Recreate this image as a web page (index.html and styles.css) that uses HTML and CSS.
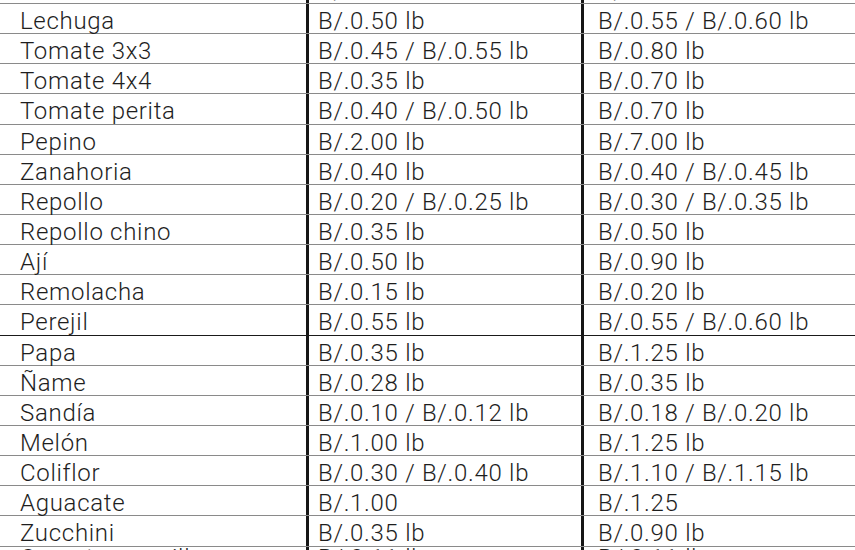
FILE: index.html
```html
<!DOCTYPE html>
<html lang="es">
<head>
<meta charset="utf-8">
<title>Precios de vegetales</title>
<link rel="stylesheet" href="styles.css">
</head>
<body>
<div class="tabla">
  <div class="fila"><div class="c c1">Brócoli</div><div class="c c2">B/.0.60 lb</div><div class="c c3">B/.1.25 lb</div></div>
  <div class="fila"><div class="c c1">Lechuga</div><div class="c c2">B/.0.50 lb</div><div class="c c3">B/.0.55 / B/.0.60 lb</div></div>
  <div class="fila"><div class="c c1">Tomate 3x3</div><div class="c c2">B/.0.45 / B/.0.55 lb</div><div class="c c3">B/.0.80 lb</div></div>
  <div class="fila"><div class="c c1">Tomate 4x4</div><div class="c c2">B/.0.35 lb</div><div class="c c3">B/.0.70 lb</div></div>
  <div class="fila"><div class="c c1">Tomate perita</div><div class="c c2">B/.0.40 / B/.0.50 lb</div><div class="c c3">B/.0.70 lb</div></div>
  <div class="fila"><div class="c c1">Pepino</div><div class="c c2">B/.2.00 lb</div><div class="c c3">B/.7.00 lb</div></div>
  <div class="fila"><div class="c c1">Zanahoria</div><div class="c c2">B/.0.40 lb</div><div class="c c3">B/.0.40 / B/.0.45 lb</div></div>
  <div class="fila"><div class="c c1">Repollo</div><div class="c c2">B/.0.20 / B/.0.25 lb</div><div class="c c3">B/.0.30 / B/.0.35 lb</div></div>
  <div class="fila"><div class="c c1">Repollo chino</div><div class="c c2">B/.0.35 lb</div><div class="c c3">B/.0.50 lb</div></div>
  <div class="fila"><div class="c c1">Ají</div><div class="c c2">B/.0.50 lb</div><div class="c c3">B/.0.90 lb</div></div>
  <div class="fila"><div class="c c1">Remolacha</div><div class="c c2">B/.0.15 lb</div><div class="c c3">B/.0.20 lb</div></div>
  <div class="fila oscura"><div class="c c1">Perejil</div><div class="c c2">B/.0.55 lb</div><div class="c c3">B/.0.55 / B/.0.60 lb</div></div>
  <div class="fila"><div class="c c1">Papa</div><div class="c c2">B/.0.35 lb</div><div class="c c3">B/.1.25 lb</div></div>
  <div class="fila"><div class="c c1">Ñame</div><div class="c c2">B/.0.28 lb</div><div class="c c3">B/.0.35 lb</div></div>
  <div class="fila"><div class="c c1">Sandía</div><div class="c c2">B/.0.10 / B/.0.12 lb</div><div class="c c3">B/.0.18 / B/.0.20 lb</div></div>
  <div class="fila"><div class="c c1">Melón</div><div class="c c2">B/.1.00 lb</div><div class="c c3">B/.1.25 lb</div></div>
  <div class="fila"><div class="c c1">Coliflor</div><div class="c c2">B/.0.30 / B/.0.40 lb</div><div class="c c3">B/.1.10 / B/.1.15 lb</div></div>
  <div class="fila"><div class="c c1">Aguacate</div><div class="c c2">B/.1.00</div><div class="c c3">B/.1.25</div></div>
  <div class="fila"><div class="c c1">Zucchini</div><div class="c c2">B/.0.35 lb</div><div class="c c3">B/.0.90 lb</div></div>
  <div class="fila ultima"><div class="c c1">Camote amarillo</div><div class="c c2">B/.0.11 lb</div><div class="c c3">B/.0.11 lb</div></div>
</div>
</body>
</html>
```
FILE: styles.css
```css
html, body {
  margin: 0;
  padding: 0;
  background: #ffffff;
  overflow: hidden;
}
body {
  width: 855px;
  height: 550px;
  font-family: Roboto, "Liberation Sans", sans-serif;
  color: #1e1e1e;
}
.tabla {
  margin-top: -26.15px;
  display: flex;
  flex-direction: column;
}
.fila {
  display: grid;
  grid-template-columns: 309px 275px 1fr;
  height: 30.15px;
  box-sizing: border-box;
  border-bottom: 1px solid #8a8a8a;
}
.fila.oscura {
  border-bottom-color: #1a1a1a;
}
.c {
  box-sizing: border-box;
  font-size: 24px;
  font-weight: 300;
  letter-spacing: 0.7px;
  line-height: 23px;
  padding-top: 6px;
  white-space: nowrap;
}
.c1 {
  padding-left: 20px;
  border-right: 3px solid #161616;
}
.c2 {
  padding-left: 9px;
  border-right: 3px solid #161616;
}
.c3 {
  padding-left: 14px;
}
.ultima .c {
  padding-top: 0;
}
```
